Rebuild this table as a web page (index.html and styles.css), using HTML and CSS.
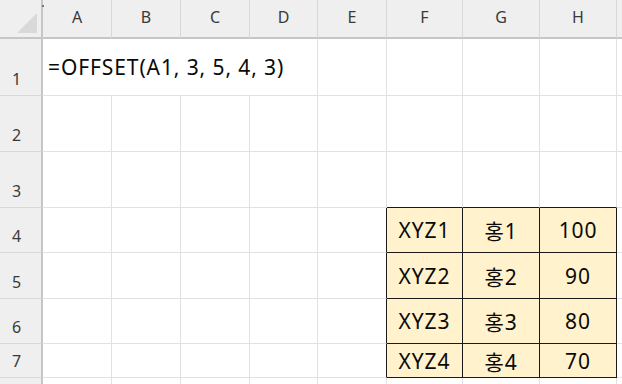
FILE: index.html
```
<!DOCTYPE html>
<html lang="ko">
<head>
<meta charset="utf-8">
<link rel="stylesheet" href="styles.css">
</head>
<body>
<div class="sheet">
  <div class="corner"><span class="tri"></span><span class="dot"></span></div>
  <div class="ch">A</div><div class="ch">B</div><div class="ch">C</div><div class="ch">D</div>
  <div class="ch">E</div><div class="ch">F</div><div class="ch">G</div><div class="ch">H</div><div class="ch last"></div>

  <div class="rh">1</div>
  <div class="c formula">=OFFSET(A1, 3, 5, 4, 3)</div>
  <div class="c"></div><div class="c"></div><div class="c"></div><div class="c"></div><div class="c"></div>

  <div class="rh">2</div>
  <div class="c"></div><div class="c"></div><div class="c"></div><div class="c"></div><div class="c"></div><div class="c"></div><div class="c"></div><div class="c"></div><div class="c"></div>

  <div class="rh">3</div>
  <div class="c"></div><div class="c"></div><div class="c"></div><div class="c"></div><div class="c"></div><div class="c bb"></div><div class="c bb"></div><div class="c bb"></div><div class="c"></div>

  <div class="rh">4</div>
  <div class="c"></div><div class="c"></div><div class="c"></div><div class="c"></div><div class="c br"></div>
  <div class="c t">XYZ1</div><div class="c t">홍1</div><div class="c t">100</div><div class="c"></div>

  <div class="rh">5</div>
  <div class="c"></div><div class="c"></div><div class="c"></div><div class="c"></div><div class="c br"></div>
  <div class="c t">XYZ2</div><div class="c t">홍2</div><div class="c t">90</div><div class="c"></div>

  <div class="rh">6</div>
  <div class="c"></div><div class="c"></div><div class="c"></div><div class="c"></div><div class="c br"></div>
  <div class="c t">XYZ3</div><div class="c t">홍3</div><div class="c t">80</div><div class="c"></div>

  <div class="rh">7</div>
  <div class="c"></div><div class="c"></div><div class="c"></div><div class="c"></div><div class="c br"></div>
  <div class="c t">XYZ4</div><div class="c t">홍4</div><div class="c t">70</div><div class="c"></div>

  <div class="rh"></div>
  <div class="c"></div><div class="c"></div><div class="c"></div><div class="c"></div><div class="c"></div><div class="c"></div><div class="c"></div><div class="c"></div><div class="c"></div>
</div>
</body>
</html>
```

FILE: styles.css
```
html, body {
  margin: 0;
  padding: 0;
  background: #ffffff;
  overflow: hidden;
}

.sheet {
  display: grid;
  grid-template-columns: 43px 69px 69px 69px 68px 69px 76px 77px 77px 20px;
  grid-template-rows: 39px 57px 56px 56px 45px 46px 45px 34px 20px;
  width: 622px;
  height: 384px;
  overflow: hidden;
  font-family: "Noto Sans", "Noto Sans CJK KR", sans-serif;
}

.corner {
  position: relative;
  background: #efefef;
  border-right: 2px solid #c6c6c6;
  border-bottom: 2px solid #c6c6c6;
  box-sizing: border-box;
}

.tri {
  position: absolute;
  left: 17px;
  top: 13px;
  width: 0;
  height: 0;
  border-left: 20px solid transparent;
  border-bottom: 20px solid #d9d9d9;
}

.dot {
  position: absolute;
  left: 42px;
  top: 5px;
  width: 2px;
  height: 2px;
  background: #777;
}

.ch {
  background: #efefef;
  border-right: 1px solid #d8d8d8;
  border-bottom: 2px solid #c6c6c6;
  box-sizing: border-box;
  display: flex;
  align-items: center;
  justify-content: center;
  font-size: 16px;
  color: #3a3a3a;
  padding-bottom: 3px;
}

.ch.last {
  border-right: none;
}

.rh {
  background: #efefef;
  border-right: 2px solid #c6c6c6;
  border-bottom: 1px solid #d8d8d8;
  box-sizing: border-box;
  display: flex;
  align-items: flex-end;
  padding: 0 0 5px 12px;
  font-size: 16px;
  color: #3a3a3a;
}

.c {
  border-right: 1px solid #e1e1e1;
  border-bottom: 1px solid #e1e1e1;
  box-sizing: border-box;
  display: flex;
  align-items: center;
  justify-content: center;
  font-size: 21px;
  letter-spacing: 0.9px;
  color: #0a0a0a;
  white-space: nowrap;
}

.formula {
  grid-column: span 4;
  justify-content: flex-start;
  padding-left: 5px;
}

.bb {
  border-bottom-color: #1a1a1a;
}

.br {
  border-right-color: #1a1a1a;
}

.t {
  background: #fff2cc;
  border-right-color: #1a1a1a;
  border-bottom-color: #1a1a1a;
}
```
